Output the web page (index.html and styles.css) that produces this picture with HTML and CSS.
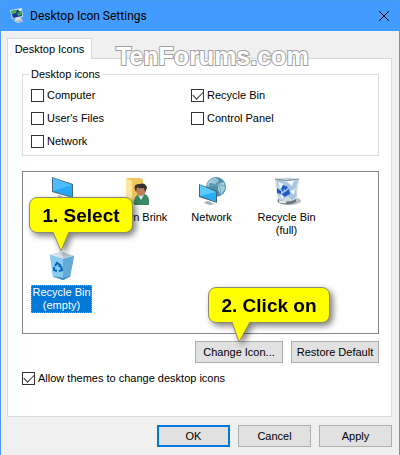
FILE: index.html
```html
<!DOCTYPE html>
<html lang="en">
  <head>
    <meta charset="UTF-8" />
    <meta name="viewport" content="width=device-width, initial-scale=1.0" />
    <title>Desktop Icon Settings</title>
    <link rel="stylesheet" href="styles.css">
  </head>

  <body>
    <main class="window">
      <header class="titlebar">
        <svg class="app-icon" viewBox="0 0 16 16" aria-hidden="true">
          <path d="M1 2 L13 0 L14 9 L3 11 Z" fill="#d3dce0" />
          <path d="M2 3 L12 1 L13 8 L4 10 Z" fill="#1637a0" />
          <path d="M2 3 L8 2 L7 5 L3 6 Z" fill="#52b73c" />
          <path d="M8 5 L12 3 L13 7 L9 8 Z" fill="#36a34a" />
          <path d="M9 1 L12 1 L12 3 L10 3 Z" fill="#e8f4f8" />
          <path d="M7 10 L11 9 L14 13 L9 15 L5 13 Z" fill="#dfe3e6" />
          <path d="M6 13 L12 11 L14 13 L9 15 Z" fill="#b7bcc4" />
        </svg>
        <h1 class="title">Desktop Icon Settings</h1>
        <button class="close" type="button" aria-label="Close">
          <svg viewBox="0 0 10 10" width="10" height="10">
            <path d="M0 0 L10 10 M10 0 L0 10" stroke="#000" fill="none" />
          </svg>
        </button>
      </header>

      <div class="content">
        <div class="tabs">
          <button class="tab" type="button">Desktop Icons</button>
          <div class="watermark">TenForums.com</div>
        </div>

        <section class="panel">
          <fieldset class="group">
            <legend>Desktop icons</legend>
            <div class="options">
              <label class="check"><input type="checkbox" />Computer</label>
              <label class="check"><input type="checkbox" checked />Recycle Bin</label>
              <label class="check"><input type="checkbox" />User's Files</label>
              <label class="check"><input type="checkbox" />Control Panel</label>
              <label class="check"><input type="checkbox" />Network</label>
            </div>
          </fieldset>

          <ul class="icons">
            <li class="item">
              <svg class="icon" viewBox="0 0 28 28" aria-hidden="true">
                <path d="M4 0 L25 7 V21 L4 15 Z" fill="#526879" />
                <path d="M5 1 L24 8 V20 L5 14 Z" fill="#27a8f4" />
                <path d="M5 1 L24 8 L5 14 Z" fill="#4dbcff" />
                <path d="M10 18 L14 19 V22 L18 24 L12 25 L7 23 L10 22 Z" fill="#b6c3cb" />
              </svg>
              <span class="name">This PC</span>
            </li>
            <li class="item">
              <svg class="icon" viewBox="0 0 28 28" aria-hidden="true">
                <path d="M3 1 H18 L20 3 V27 H3 Z" fill="#f0c75e" />
                <path d="M3 1 L9 4 V28 L3 25 Z" fill="#ffe6a0" />
                <path d="M11 28 Q10 18 17 17 H22 Q27 19 26 28 Z" fill="#398965" />
                <path d="M15 18 L18 23 L21 18 Z" fill="#e1e9df" />
                <ellipse cx="18" cy="13" rx="5" ry="6" fill="#bd8059" />
                <path d="M12 13 Q10 7 16 7 Q23 5 24 11 L22 15 L21 11 Q16 12 14 10 L13 15 Z" fill="#38302a" />
              </svg>
              <span class="name">Shawn Brink</span>
            </li>
            <li class="item">
              <svg class="icon" viewBox="0 0 28 28" aria-hidden="true">
                <circle cx="18" cy="10" r="10" fill="#4d8eaa" />
                <path d="M9 7 Q12 0 18 1 L21 4 L17 7 L12 6 L10 11 Z M20 7 L26 5 L27 12 L23 18 L20 13 Z" fill="#a3cddd" />
                <path d="M13 1 Q25 7 22 19 M9 10 Q18 6 27 9" stroke="#73adbf" fill="none" />
                <path d="M1 7 L19 14 V26 L1 20 Z" fill="#476474" />
                <path d="M2 8 L18 15 V25 L2 19 Z" fill="#27acf6" />
                <path d="M2 8 L18 15 L2 19 Z" fill="#5acaff" />
                <path d="M9 24 L13 25 V26 L17 27 L12 28 L6 26 Z" fill="#9eaeb6" />
              </svg>
              <span class="name">Network</span>
            </li>
            <li class="item">
              <svg class="icon" viewBox="0 0 28 28" aria-hidden="true">
                <ellipse cx="16" cy="24" rx="12" ry="4" fill="#b9bdc0" />
                <path d="M2 2 Q14 -1 26 2 L23 25 Q14 29 5 25 Z" fill="#cedbe4" />
                <path d="M5 22 Q14 27 23 22 V25 Q14 30 5 25 Z" fill="#70777c" />
                <path d="M4 3 L9 2 L12 6 L17 1 L20 5 L25 3 L22 12 L24 19 L19 23 L15 19 L9 23 L5 17 L7 12 L4 8 Z" fill="#a6c5df" />
                <path d="M5 5 L11 7 L7 12 Z M13 4 L21 3 L19 9 Z M17 14 L22 12 L21 18 Z M7 18 L12 19 L9 22 Z" fill="#f1f7fb" />
                <path d="M8 12 L10 8 L15 10 L13 13 L11 12 L10 15 Z M4 11 L8 14 L8 17 L4 16 Z M12 15 L16 12 L17 17 L11 20 L9 17 Z" fill="#1d5cc7" />
                <path d="M2 2 Q14 5 26 2" stroke="#7f8d96" fill="none" />
                <path d="M6 24 Q10 26 13 25" stroke="#ecefef" stroke-width="2" fill="none" />
              </svg>
              <span class="name">Recycle Bin<br>(full)</span>
            </li>
            <li class="item">
              <svg class="icon" viewBox="0 0 28 28" aria-hidden="true">
                <path d="M2 3 L14 0 L26 4 L22 25 L15 28 L5 25 Z" fill="#72b7e4" />
                <path d="M2 3 L14 0 L26 4 L15 7 Z" fill="#dce5e9" />
                <path d="M14 0 L25 4 L15 6 Z" fill="#bdc8ce" />
                <path d="M2 3 L15 7 V28 L5 25 Z" fill="#8bcbf2" />
                <path d="M15 7 L26 4 L22 25 L15 28 Z" fill="#64aad9" />
                <path d="M5 24 L15 26 L22 24 L15 28 Z" fill="#3c87bd" />
                <path d="M7 14 L9 11 L12 13 L11 15 M13 14 L14 18 L11 19 M9 19 L6 18 L6 15" stroke="#0868b8" stroke-width="2" fill="none" />
              </svg>
              <span class="name selected">Recycle Bin<br>(empty)</span>
              <div class="callout callout-select">
                1. Select
                <svg class="tail" viewBox="0 0 20 21" aria-hidden="true">
                  <path d="M1 0 L9 19 L17 0" />
                </svg>
              </div>
            </li>
          </ul>

          <div class="actions">
            <div class="anchor">
              <button class="btn" type="button">Change Icon...</button>
              <div class="callout callout-click">
                2. Click on
                <svg class="tail" viewBox="0 0 20 21" aria-hidden="true">
                  <path d="M1 0 L8 20 L19 0" />
                </svg>
              </div>
            </div>
            <button class="btn" type="button">Restore Default</button>
          </div>

          <label class="check"><input type="checkbox" checked />Allow themes to change desktop icons</label>
        </section>

        <footer class="footer">
          <button class="btn default" type="button">OK</button>
          <button class="btn" type="button">Cancel</button>
          <button class="btn" type="button">Apply</button>
        </footer>
      </div>
    </main>
  </body>
</html>
```

FILE: styles.css
```css
* {
  box-sizing: border-box;
}

body {
  margin: 0;
  font: 11px/14px "Liberation Sans", Arial, sans-serif;
  color: #000;
  background-color: #f0f0f0;
}

button {
  font: inherit;
  color: inherit;
}

.window {
  min-height: 100vh;
  border: 1px solid #4a9cf2;
  background-color: #f0f0f0;
}

.titlebar {
  display: flex;
  align-items: center;
  height: 30px;
  padding: 0 10px 0 8px;
  background-color: #429cff;
}

.app-icon {
  width: 16px;
  height: 16px;
}

.title {
  margin: 0 auto 0 5px;
  font: 12px/14px Roboto, sans-serif;
}

.close {
  display: flex;
  padding: 0;
  border: none;
  background: none;
}

.content {
  padding: 7px 7px 8px 6px;
}

/* tabs */
.tabs {
  position: relative;
  height: 21px;
}

.tab {
  position: relative;
  z-index: 1;
  width: 85px;
  height: 21px;
  padding: 0;
  border: 1px solid #d9d9d9;
  border-bottom: none;
  background-color: #fff;
}

.watermark {
  position: absolute;
  top: 6px;
  left: 109px;
  z-index: 2;
  font: bold 25px/25px "Liberation Sans", Arial, sans-serif;
  color: #fff;
  -webkit-text-stroke: 2px #a0a0a0;
  paint-order: stroke fill;
}

.panel {
  height: 359px;
  margin-top: -1px;
  padding: 8px 12px 0 14px;
  border: 1px solid #d9d9d9;
  background-color: #fff;
}

/* checkboxes */
.group {
  height: 89px;
  margin: 0 0 15px;
  padding: 0 8px;
  border: 1px solid #dcdcdc;
}

.group legend {
  padding: 0 2px;
  margin-left: -2px;
}

.options {
  display: grid;
  grid-template-columns: 160px 1fr;
  row-gap: 9px;
  padding-top: 7px;
}

.check {
  display: flex;
  align-items: center;
  gap: 3px;
}

.check input {
  display: grid;
  place-items: center;
  appearance: none;
  width: 13px;
  height: 13px;
  margin: 0;
  border: 1px solid #333;
  background-color: #fff;
}

.check input:checked::before {
  content: "";
  width: 9px;
  height: 5px;
  margin-bottom: 3px;
  border-left: 1px solid #333;
  border-bottom: 1px solid #333;
  transform: rotate(-45deg);
}

/* icon list */
.icons {
  display: grid;
  grid-template-columns: repeat(4, 75px);
  grid-auto-rows: 75px;
  height: 163px;
  margin: 0;
  padding: 5px 1px;
  border: 1px solid #828790;
  list-style: none;
}

.item {
  position: relative;
  display: flex;
  flex-direction: column;
  align-items: center;
  gap: 5px;
  line-height: 13px;
  text-align: center;
}

.icon {
  width: 28px;
  height: 28px;
}

.name {
  border: 1px solid transparent;
  white-space: nowrap;
}

.selected {
  border: 1px dotted #ff8728;
  color: #fff;
  background-color: #0078d7;
}

/* buttons */
.actions,
.footer {
  display: flex;
  justify-content: flex-end;
  gap: 8px;
}

.actions {
  margin: 7px 0 8px;
}

.btn {
  height: 22px;
  padding: 0;
  border: 1px solid #adadad;
  background-color: #e1e1e1;
}

.actions .btn {
  width: 88px;
}

.footer {
  padding-top: 8px;
}

.footer .btn {
  width: 73px;
}

.btn.default {
  border: 2px solid #0078d7;
}

/* callouts */
.anchor {
  position: relative;
}

.callout {
  position: absolute;
  z-index: 3;
  height: 36px;
  border: 1px solid #8c8c6c;
  border-radius: 8px;
  font: bold 19px/36px "Liberation Sans", Arial, sans-serif;
  text-align: center;
  white-space: nowrap;
  background-color: #ff0;
  filter: drop-shadow(3px 3px 3px rgba(0, 0, 0, 0.5));
}

.callout-select {
  bottom: 94px;
  left: 5px;
  width: 104px;
}

.callout-click {
  bottom: 40px;
  left: 13px;
  width: 122px;
}

.tail {
  position: absolute;
  top: 34px;
  left: 22px;
  width: 20px;
  height: 21px;
  fill: #ff0;
  stroke: #8c8c6c;
}
```
